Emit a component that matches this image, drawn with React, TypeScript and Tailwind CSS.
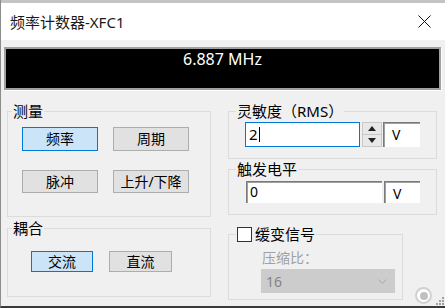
import React from 'react';

// --- botão estilo Windows ---
interface BtnProps {
    label: string;
    active?: boolean;
    className?: string;
}

const Btn: React.FC<BtnProps> = ({ label, active = false, className = '' }) => (
    <button
        className={`flex items-center justify-center border text-[14px] leading-none text-black ${active ? 'bg-[#cce4f7] border-[#0078d7]' : 'bg-[#e1e1e1] border-[#adadad]'} ${className}`}
    >
        {label}
    </button>
);

const VBox: React.FC<{ className?: string }> = ({ className = '' }) => (
    <div className={`bg-white border-t border-l border-[#7a7a7a] shadow-[inset_1px_1px_0_#a0a0a0] pl-[8px] pt-[2px] text-[14px] leading-[20px] ${className}`}>
        V
    </div>
);

export default function App() {
    return (
        <div className="relative w-[445px] h-[308px] overflow-hidden bg-[#f0f0f0] border-l border-[#8c8c8c] border-b-2 border-b-[#3a3a3a] font-['Noto_Sans','Noto_Sans_CJK_SC',sans-serif] text-black">
            <div className="h-[3px] bg-[#c4c4c4]" />

            {/* barra de título */}
            <header className="h-[37px] bg-white flex items-center justify-between pl-[9px] pr-[14px]">
                <span className="text-[15px] leading-[20px] text-[#1a1a1a]">频率计数器-XFC1</span>
                <svg width="13" height="13" viewBox="0 0 13 13">
                    <path d="M0.5 0.5 L12.5 12.5 M12.5 0.5 L0.5 12.5" stroke="#111" strokeWidth="1" fill="none" />
                </svg>
            </header>

            {/* visor */}
            <div className="ml-[3px] mt-[7px] w-[437px] h-[43px] border-2 border-[#a0a0a0] bg-black shadow-[1px_1px_0_#ffffff] text-center text-white text-[16px] leading-[18px] pt-[1px]">
                6.887 MHz
            </div>

            <div className="mt-[11px] pl-[6px] grid grid-cols-[204px_209px] gap-x-[17px]">
                {/* coluna esquerda */}
                <div className="flex flex-col">
                    <fieldset className="border border-[#dcdcdc] px-[4px] pb-[23px]">
                        <legend className="px-[1px] text-[15px] leading-[20px]">测量</legend>
                        <div className="pl-[10px] pt-[6px] grid grid-cols-[76px_76px] gap-x-[15px] gap-y-[19px]">
                            <Btn label="频率" active className="h-[24px]" />
                            <Btn label="周期" className="h-[24px]" />
                            <Btn label="脉冲" className="h-[23px]" />
                            <Btn label="上升/下降" className="h-[23px]" />
                        </div>
                    </fieldset>

                    <fieldset className="mt-[1px] border border-[#dcdcdc] px-[4px] pb-[24px]">
                        <legend className="px-[1px] text-[15px] leading-[20px]">耦合</legend>
                        <div className="pl-[19px] pt-[13px] flex gap-[16px]">
                            <Btn label="交流" active className="w-[62px] h-[21px]" />
                            <Btn label="直流" className="w-[63px] h-[21px]" />
                        </div>
                    </fieldset>
                </div>

                {/* coluna direita */}
                <div className="flex flex-col">
                    <fieldset className="border border-[#dcdcdc] px-[7px] pb-[11px]">
                        <legend className="px-[1px] text-[15px] leading-[20px]">灵敏度（RMS）</legend>
                        <div className="pl-[9px] pt-[1px] flex">
                            <div className="w-[115px] h-[25px] bg-white border border-[#0078d7] flex items-center pl-[3px] text-[15px]">
                                <span>2</span>
                                <span className="ml-[1px] w-px h-[15px] bg-black" />
                            </div>
                            <div className="ml-[2px] w-[20px] h-[25px] flex flex-col border border-[#c8c8c8] bg-[#e8e8e8]">
                                <div className="flex-1 flex items-center justify-center border-b border-[#c8c8c8]">
                                    <svg width="8" height="5" viewBox="0 0 8 5"><path d="M0 5 L4 0 L8 5 Z" fill="#222" /></svg>
                                </div>
                                <div className="flex-1 flex items-center justify-center">
                                    <svg width="8" height="5" viewBox="0 0 8 5"><path d="M0 0 L8 0 L4 5 Z" fill="#222" /></svg>
                                </div>
                            </div>
                            <VBox className="ml-[1px] w-[37px] h-[25px]" />
                        </div>
                    </fieldset>

                    <fieldset className="border border-[#dcdcdc] px-[7px] pb-[11px]">
                        <legend className="px-[1px] text-[15px] leading-[20px]">触发电平</legend>
                        <div className="pl-[10px] pt-[2px] flex">
                            <div className="w-[136px] h-[22px] bg-white border-t border-l border-[#7a7a7a] shadow-[inset_1px_1px_0_#a0a0a0] pl-[3px] text-[14px] leading-[20px]">
                                0
                            </div>
                            <VBox className="ml-[2px] w-[36px] h-[22px]" />
                        </div>
                    </fieldset>

                    <fieldset className="mt-[9px] w-[175px] border border-[#dcdcdc] px-[7px] pb-[6px]">
                        <legend className="px-[1px] flex items-center gap-[3px] text-[15px] leading-[20px]">
                            <span className="w-[15px] h-[15px] bg-white border border-[#333]" />
                            缓变信号
                        </legend>
                        <div className="pl-[25px] pt-[4px]">
                            <div className="pl-[1px] text-[14px] leading-[20px] text-[#a0a0a0]">压缩比：</div>
                            <div className="mt-[1px] w-[134px] h-[24px] bg-[#cccccc] flex items-center justify-between pl-[5px] pr-[8px] text-[14px] text-[#838383]">
                                16
                                <svg width="9" height="5" viewBox="0 0 9 5">
                                    <path d="M0.5 0.5 L4.5 4.5 L8.5 0.5" stroke="#a8a8a8" strokeWidth="1" fill="none" />
                                </svg>
                            </div>
                        </div>
                    </fieldset>
                </div>
            </div>

            {/* indicador e alça de redimensionar */}
            <div className="absolute left-[414px] top-[287px] w-[17px] h-[17px] rounded-full border-2 border-[#d0d0d0] bg-white flex items-center justify-center">
                <div className="w-[8px] h-[8px] rounded-full bg-[#c0c0c0]" />
            </div>
            <svg className="absolute right-0 bottom-0" width="10" height="10" viewBox="0 0 10 10">
                <rect x="7" y="1" width="2" height="2" fill="#a0a0a0" />
                <rect x="7" y="4" width="2" height="2" fill="#a0a0a0" />
                <rect x="4" y="4" width="2" height="2" fill="#a0a0a0" />
                <rect x="7" y="7" width="2" height="2" fill="#a0a0a0" />
                <rect x="4" y="7" width="2" height="2" fill="#a0a0a0" />
                <rect x="1" y="7" width="2" height="2" fill="#a0a0a0" />
            </svg>
        </div>
    );
}
